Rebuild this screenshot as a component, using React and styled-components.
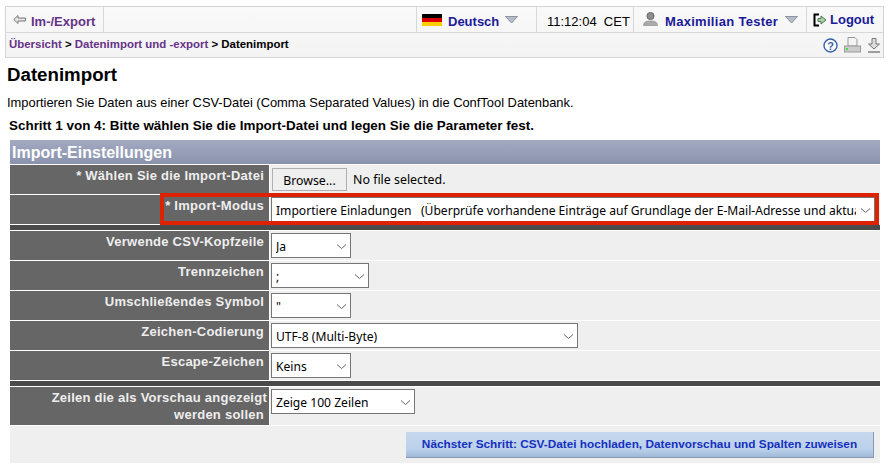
import React from 'react';
import styled, { createGlobalStyle } from 'styled-components';

const GlobalStyle = createGlobalStyle`
  html, body {
    background: #fff;
    color: #000;
    font-family: 'Liberation Sans', Arial, sans-serif;
    margin: 0;
    overflow: hidden;
    padding: 0;
  }
`;

const Page = styled.div`
  height: 468px;
  padding: 6px 4px 0 5px;
  width: 888px;
  box-sizing: border-box;
`;

const Nav = styled.div`
  background: linear-gradient(180deg, #f9f9f9 0%, #f3f3f3 100%);
  border: 1px solid #d4d4d4;
  height: 52px;
  box-sizing: border-box;
`;
const TopBar = styled.div`
  align-items: stretch;
  border-bottom: 1px solid #d8d8d8;
  display: flex;
  height: 25px;
`;
const NavCell = styled.div`
  align-items: center;
  border-left: ${(p) => (p.$first ? 'none' : '1px solid #d8d8d8')};
  display: flex;
  font-size: 13px;
  font-weight: ${(p) => (p.$plain ? 'normal' : 'bold')};
  gap: ${(p) => p.$gap || 0}px;
  padding-left: ${(p) => p.$pad || 0}px;
  width: ${(p) => p.$w}px;
  box-sizing: border-box;
  white-space: nowrap;
`;
const Spacer = styled.div`
  border-left: 1px solid #d8d8d8;
  flex: 1;
`;
const PurpleLink = styled.span`
  color: #663388;
  padding-top: ${(p) => (p.$inline ? 0 : 3)}px;
`;
const BlueLink = styled.span`
  color: #1a1a99;
  letter-spacing: ${(p) => p.$spacing || 0}px;
  padding-top: ${(p) => (p.$raised ? 0 : 3)}px;
`;
const Clock = styled.span`
  padding-top: 3px;
`;
const CrumbBar = styled.div`
  align-items: center;
  display: flex;
  font-size: 11.45px;
  font-weight: bold;
  height: 24px;
  justify-content: space-between;
  padding: 0 2px 0 3px;
`;
const CrumbText = styled.span`
  padding-bottom: 2px;
`;
const CrumbTools = styled.div`
  align-items: center;
  display: flex;
  gap: 6px;
`;
const Heading = styled.h1`
  font-size: 18.7px;
  font-weight: bold;
  line-height: 21px;
  margin: 6px 0 0 2px;
`;
const Intro = styled.p`
  font-size: 12.9px;
  line-height: 14px;
  margin: 11px 0 0 2px;
`;
const Step = styled.p`
  font-size: 13.45px;
  font-weight: bold;
  line-height: 15px;
  margin: 8px 0 0 4px;
`;

const Form = styled.div`
  margin: 7px 0 0 5px;
  width: 870px;
`;
const FormTitle = styled.div`
  background: linear-gradient(180deg, #a3a9c3 0%, #8a93ad 100%);
  color: #fff;
  font-size: 16px;
  font-weight: bold;
  height: 24px;
  line-height: 25px;
  padding-left: 2px;
`;
const Row = styled.div`
  display: grid;
  grid-template-columns: 259px 611px;
  height: ${(p) => p.$h || 29}px;
  margin-top: 1px;
  position: relative;
`;
const Label = styled.div`
  background: #666;
  color: #eee;
  font-size: 13px;
  font-weight: bold;
  letter-spacing: 0.25px;
  line-height: 17px;
  padding: 2px 5px 0 0;
  text-align: right;
`;
const LongLine = styled.span`
  display: block;
  margin-right: -3px;
  white-space: nowrap;
`;
const Field = styled.div`
  align-items: flex-start;
  background: #efefef;
  display: flex;
  margin-left: 1px;
  padding: 2px 0 0 1px;
`;
const Separator = styled.div`
  background: #4a4a4a;
  height: 5px;
  margin-top: 1px;
`;
const Select = styled.div`
  align-items: center;
  background: #fff;
  border: 1px solid #767676;
  box-sizing: border-box;
  color: #000;
  display: flex;
  font-family: 'Noto Sans', sans-serif;
  font-size: 12.1px;
  gap: 4px;
  height: 25px;
  justify-content: space-between;
  padding: 2px 3px 0 4px;
  white-space: pre;
  width: ${(p) => p.$w}px;
  overflow: hidden;
`;
const SelectText = styled.span`
  overflow: hidden;
  flex: 1;
`;
const Browse = styled.div`
  background: #efefef;
  border: 1px solid #b0b0b0;
  box-sizing: border-box;
  font-family: 'Noto Sans', sans-serif;
  font-size: 12.3px;
  height: 23px;
  line-height: 24px;
  margin: 1px 0 0 1px;
  text-align: center;
  width: 75px;
`;
const FileName = styled.span`
  font-family: 'Noto Sans', sans-serif;
  font-size: 12.4px;
  line-height: 26px;
  margin-left: 6px;
`;
const Highlight = styled.div`
  border: 4px solid #dd2200;
  bottom: -1px;
  left: 150px;
  pointer-events: none;
  position: absolute;
  right: 1px;
  top: -2px;
`;
const Footer = styled.div`
  background: #efefef;
  display: flex;
  height: 37px;
  justify-content: flex-end;
  margin-top: 1px;
  padding: 6px 6px 0 0;
  box-sizing: border-box;
`;
const NextButton = styled.div`
  background: linear-gradient(180deg, #c6d8ef 0%, #bbd0ea 70%, #9fb9d8 100%);
  border-bottom: 1px solid #8a9ab0;
  border-right: 1px solid #8a9ab0;
  box-sizing: border-box;
  color: #1530c0;
  font-size: 11.8px;
  font-weight: bold;
  height: 26px;
  line-height: 25px;
  text-align: center;
  width: 468px;
`;

const Chevron = () => (
  <svg width="11" height="7" viewBox="0 0 11 7" fill="none">
    <path d="M1 1.5 L5.5 5.5 L10 1.5" stroke="#666" strokeWidth="1" />
  </svg>
);

const Caret = () => (
  <svg width="13" height="8" viewBox="0 0 13 8">
    <path d="M0.5 0.5 H12.5 L6.5 7 Z" fill="#b5bccb" stroke="#7d828e" strokeWidth="0.8" />
  </svg>
);

const BackArrow = () => (
  <svg width="13" height="9" viewBox="0 0 13 9">
    <path d="M5 0.5 L0.8 4.5 L5 8.5 V6 H12.5 V3 H5 Z" fill="#e4e4e4" stroke="#777" strokeWidth="1" />
  </svg>
);

const Flag = () => (
  <svg width="20" height="12" viewBox="0 0 20 12">
    <rect width="20" height="4" fill="#000" />
    <rect y="4" width="20" height="4" fill="#dd0000" />
    <rect y="8" width="20" height="4" fill="#ffce00" />
  </svg>
);

const UserIcon = () => (
  <svg width="15" height="16" viewBox="0 0 15 16">
    <circle cx="7.5" cy="4" r="3.6" fill="#8f8f8f" stroke="#555" strokeWidth="0.8" />
    <path d="M0.5 13.5 C0.5 9.5 4 9 7.5 9 C11 9 14.5 9.5 14.5 13.5 Z" fill="#aaa" stroke="#888" strokeWidth="0.6" />
  </svg>
);

const LogoutIcon = () => (
  <svg width="14" height="14" viewBox="0 0 14 14" fill="none">
    <path d="M6 1.5 H1.5 V12.5 H6" stroke="#000" strokeWidth="2" />
    <path d="M5 5.5 H8 V3 L13 7 L8 11 V8.5 H5 Z" fill="#a5d6a0" stroke="#55705a" strokeWidth="1" />
  </svg>
);

const HelpIcon = () => (
  <svg width="15" height="15" viewBox="0 0 15 15">
    <circle cx="7.5" cy="7.5" r="6.5" fill="#fff" stroke="#3a5fa8" strokeWidth="1.4" />
    <text x="7.5" y="11.5" textAnchor="middle" fontSize="11" fontWeight="bold" fontFamily="Liberation Sans" fill="#3a5fa8">?</text>
  </svg>
);

const PrintIcon = () => (
  <svg width="17" height="16" viewBox="0 0 17 16">
    <path d="M4 0.5 H11 L13 2.5 V9 H4 Z" fill="#f4f4f4" stroke="#999" />
    <rect x="0.5" y="9" width="16" height="6" fill="#ccc" stroke="#999" />
    <rect x="2" y="11" width="2" height="2" fill="#44dd44" />
  </svg>
);

const DownloadIcon = () => (
  <svg width="14" height="15" viewBox="0 0 14 15">
    <path d="M5 0.5 H9 V6 H12.5 L7 11 L1.5 6 H5 Z" fill="#ddd" stroke="#777" />
    <path d="M1 14 H13" stroke="#777" strokeWidth="1.4" />
  </svg>
);

const fields = [
  { label: 'Verwende CSV-Kopfzeile', value: 'Ja', width: 80 },
  { label: 'Trennzeichen', value: ';', width: 98 },
  { label: 'Umschließendes Symbol', value: '"', width: 80 },
  { label: 'Zeichen-Codierung', value: 'UTF-8 (Multi-Byte)', width: 307 },
  { label: 'Escape-Zeichen', value: 'Keins', width: 80 },
];

const App = () => (
  <Page>
    <GlobalStyle />
    <Nav>
      <TopBar>
        <NavCell $first $w={97} $pad={7} $gap={5}>
          <BackArrow />
          <PurpleLink>Im-/Export</PurpleLink>
        </NavCell>
        <Spacer />
        <NavCell $w={120} $pad={5} $gap={6}>
          <Flag />
          <BlueLink>Deutsch</BlueLink>
          <Caret />
        </NavCell>
        <NavCell $w={97} $pad={10} $plain>
          <Clock>11:12:04&nbsp;&nbsp;CET</Clock>
        </NavCell>
        <NavCell $w={173} $pad={9} $gap={7}>
          <UserIcon />
          <BlueLink $spacing={0.3}>Maximilian Tester</BlueLink>
          <Caret />
        </NavCell>
        <NavCell $w={77} $pad={6} $gap={3}>
          <LogoutIcon />
          <BlueLink $raised>Logout</BlueLink>
        </NavCell>
      </TopBar>
      <CrumbBar>
        <CrumbText>
          <PurpleLink $inline>Übersicht</PurpleLink> &gt; <PurpleLink $inline>Datenimport und -export</PurpleLink> &gt; Datenimport
        </CrumbText>
        <CrumbTools>
          <HelpIcon />
          <PrintIcon />
          <DownloadIcon />
        </CrumbTools>
      </CrumbBar>
    </Nav>
    <Heading>Datenimport</Heading>
    <Intro>Importieren Sie Daten aus einer CSV-Datei (Comma Separated Values) in die ConfTool Datenbank.</Intro>
    <Step>Schritt 1 von 4: Bitte wählen Sie die Import-Datei und legen Sie die Parameter fest.</Step>
    <Form>
      <FormTitle>Import-Einstellungen</FormTitle>
      <Row>
        <Label>* Wählen Sie die Import-Datei</Label>
        <Field>
          <Browse>Browse...</Browse>
          <FileName>No file selected.</FileName>
        </Field>
      </Row>
      <Row>
        <Label>* Import-Modus</Label>
        <Field>
          <Select $w={604}>
            <SelectText>Importiere Einladungen   (Überprüfe vorhandene Einträge auf Grundlage der E-Mail-Adresse und aktualisiere sie)</SelectText>
            <Chevron />
          </Select>
        </Field>
        <Highlight />
      </Row>
      <Separator />
      {fields.map((f) => (
        <Row key={f.label}>
          <Label>{f.label}</Label>
          <Field>
            <Select $w={f.width}>
              <SelectText>{f.value}</SelectText>
              <Chevron />
            </Select>
          </Field>
        </Row>
      ))}
      <Separator />
      <Row $h={38}>
        <Label>
          <LongLine>Zeilen die als Vorschau angezeigt</LongLine>
          werden sollen
        </Label>
        <Field>
          <Select $w={144}>
            <SelectText>Zeige 100 Zeilen</SelectText>
            <Chevron />
          </Select>
        </Field>
      </Row>
      <Footer>
        <NextButton>Nächster Schritt: CSV-Datei hochladen, Datenvorschau und Spalten zuweisen</NextButton>
      </Footer>
    </Form>
  </Page>
);

export default App;
